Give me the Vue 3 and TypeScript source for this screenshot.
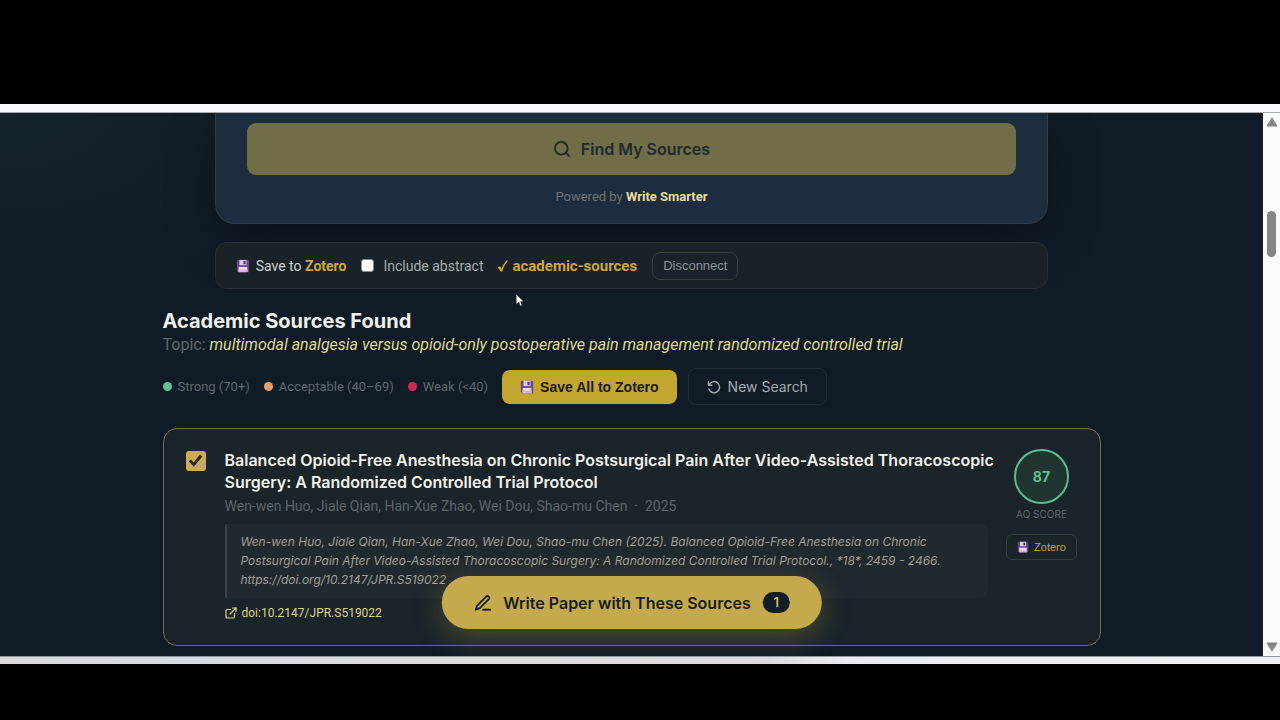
<script setup lang="ts">
import { ref } from 'vue'

interface Band {
  label: string
  tone: string
}

interface Source {
  title: string
  authors: string
  year: number
  citation: string[]
  doi: string
  score: number
}

const bands: Band[] = [
  { label: 'Strong (70+)', tone: 'strong' },
  { label: 'Acceptable (40–69)', tone: 'acceptable' },
  { label: 'Weak (<40)', tone: 'weak' },
]

const source: Source = {
  title:
    'Balanced Opioid-Free Anesthesia on Chronic Postsurgical Pain After Video-Assisted Thoracoscopic Surgery: A Randomized Controlled Trial Protocol',
  authors: 'Wen-wen Huo, Jiale Qian, Han-Xue Zhao, Wei Dou, Shao-mu Chen',
  year: 2025,
  citation: [
    'Wen-wen Huo, Jiale Qian, Han-Xue Zhao, Wei Dou, Shao-mu Chen (2025). Balanced Opioid-Free Anesthesia on Chronic',
    'Postsurgical Pain After Video-Assisted Thoracoscopic Surgery: A Randomized Controlled Trial Protocol., *18*, 2459 - 2466.',
    'https://doi.org/10.2147/JPR.S519022',
  ],
  doi: '10.2147/JPR.S519022',
  score: 87,
}

const includeAbstract = ref(false)
const selected = ref(true)
</script>

<template>
  <div class="screen">
    <svg class="defs" aria-hidden="true">
      <symbol id="floppy" viewBox="0 0 16 16">
        <path d="M1 2.5Q1 1 2.5 1H13.5Q15 1 15 2.500V15H2.500L1 13.500Z" fill="#6c4391" />
        <path d="M4 1H12V7H4Z" fill="#d9d2e2" />
        <path d="M8.500 2H11V6H8.500Z" fill="#5a3480" />
        <path d="M3 9H13V15H3Z" fill="#efd9ec" />
        <path d="M3 12H13V15H3Z" fill="#dcb4d8" />
      </symbol>
    </svg>
    <div class="toolbar"></div>
    <div class="window">
      <main class="page">
        <section class="search-card">
          <button class="find" type="button">
            <svg class="icon-lg" viewBox="0 0 24 24" fill="none" stroke="currentColor" stroke-width="2.4" stroke-linecap="round">
              <circle cx="11" cy="11" r="8.500" />
              <path d="M17.200 17.200L21.500 21.500" />
            </svg>
            <span>Find My Sources</span>
          </button>
          <p class="powered">Powered by <strong>Write Smarter</strong></p>
        </section>

        <section class="zotero-bar">
          <span class="save-to">
            <svg class="floppy"><use href="#floppy" /></svg>
            <span>Save to <strong>Zotero</strong></span>
          </span>
          <label class="abstract">
            <input v-model="includeAbstract" class="mini-check" type="checkbox" />
            <span>Include abstract</span>
          </label>
          <span class="linked">
            <svg class="tick" viewBox="0 0 10 14" fill="none" stroke="currentColor" stroke-linecap="round" stroke-linejoin="round">
              <path d="M1.200 8.500L3.500 11.500" stroke-width="2.200" />
              <path d="M3.500 11.500C5 7.500 6.500 4.500 9 2" stroke-width="1.400" />
            </svg>
            <strong>academic-sources</strong>
          </span>
          <button class="disconnect" type="button">Disconnect</button>
        </section>

        <section class="results">
          <h2>Academic Sources Found</h2>
          <p class="topic">
            Topic:
            <em>multimodal analgesia versus opioid-only postoperative pain management randomized controlled trial</em>
          </p>

          <div class="actions">
            <ul class="legend">
              <li v-for="band in bands" :key="band.tone">
                <i class="dot" :class="band.tone"></i>{{ band.label }}
              </li>
            </ul>
            <button class="save-all" type="button">
              <svg class="floppy"><use href="#floppy" /></svg>
              <span>Save All to Zotero</span>
            </button>
            <button class="new-search" type="button">
              <svg class="icon" viewBox="0 0 24 24" fill="none" stroke="currentColor" stroke-width="2.400" stroke-linecap="round" stroke-linejoin="round">
                <path d="M2.500 3V9H8.500" />
                <path d="M3.200 9A9.500 9.500 0 1 1 3.200 15.500" />
              </svg>
              <span>New Search</span>
            </button>
          </div>

          <article class="source">
            <input v-model="selected" class="pick" type="checkbox" aria-label="Select source" />
            <div class="details">
              <h3>{{ source.title }}</h3>
              <p class="authors">{{ source.authors }} &nbsp;·&nbsp; {{ source.year }}</p>
              <blockquote class="citation">
                <span v-for="line in source.citation" :key="line">{{ line }}</span>
              </blockquote>
              <a class="doi" href="#doi">
                <svg class="icon-sm" viewBox="0 0 24 24" fill="none" stroke="currentColor" stroke-width="2.400" stroke-linecap="round" stroke-linejoin="round">
                  <path d="M11 5H4.500A2.500 2.500 0 0 0 2 7.500V19.500A2.500 2.500 0 0 0 4.500 22H16.500A2.500 2.500 0 0 0 19 19.500V13" />
                  <path d="M15 2H22V9" />
                  <path d="M22 2L10 14" />
                </svg>
                <span>doi:{{ source.doi }}</span>
              </a>
            </div>
            <aside class="rating">
              <span class="score">{{ source.score }}</span>
              <span class="score-label">AQ SCORE</span>
              <button class="zotero-btn" type="button">
                <svg class="floppy-sm"><use href="#floppy" /></svg>
                <span>Zotero</span>
              </button>
            </aside>
          </article>
        </section>

        <button class="write" type="button">
          <svg class="icon-lg" viewBox="0 0 24 24" fill="none" stroke="currentColor" stroke-width="2.400" stroke-linecap="round" stroke-linejoin="round">
            <path d="M12.500 21H22" />
            <path d="M16.500 3.500A2.300 2.300 0 0 1 20 6.800L8 18.800L2.500 21L4.500 15.500Z" />
          </svg>
          <span>Write Paper with These Sources</span>
          <span class="count">1</span>
        </button>

        <svg class="pointer" viewBox="0 0 12 17" aria-hidden="true">
          <path d="M1 1V13L4 10.500L6 15L8 14L6.200 9.800H10Z" fill="#fff" stroke="#111820" stroke-width="0.800" />
        </svg>
      </main>
      <div class="scrollbar" aria-hidden="true">
        <svg class="arrow" viewBox="0 0 12 10"><path d="M6 1L11 9H1Z" fill="#858585" stroke="#858585" stroke-linejoin="round" /></svg>
        <span class="thumb"></span>
        <svg class="arrow" viewBox="0 0 12 10"><path d="M6 9L11 1H1Z" fill="#858585" stroke="#858585" stroke-linejoin="round" /></svg>
      </div>
    </div>
    <div class="taskbar"></div>
  </div>
</template>

<style>
body {
  margin: 0;
  background: #000;
}
</style>

<style scoped>
.screen {
  box-sizing: border-box;
  display: flex;
  flex-direction: column;
  height: 100vh;
  padding: 104px 0 56px;
  background: #000;
  font-family: Inter, "Liberation Sans", sans-serif;
  color: #f2f1ea;
}
.screen *,
.screen *::before {
  box-sizing: border-box;
}
p,
h2,
h3,
ul,
blockquote {
  margin: 0;
  padding: 0;
}
button {
  font-family: inherit;
  cursor: pointer;
  white-space: nowrap;
}
svg {
  flex: none;
}
.defs {
  position: absolute;
  width: 0;
  height: 0;
}
.toolbar {
  height: 9px;
  flex: none;
  background: #f8f9fe;
  border-bottom: 1px solid #a4abb3;
}
.taskbar {
  height: 8px;
  flex: none;
  background: linear-gradient(90deg, #dcd9dd 0%, #d2dbe2 15%, #dddce0 28%, #dcdadd 60%, #ebebf2 66%, #f0f0f2 100%);
  border-top: 1px solid #8f959a;
}
.window {
  display: flex;
  flex: 1;
  min-height: 0;
}
.page {
  position: relative;
  flex: 1;
  min-width: 0;
  overflow: hidden;
  display: flex;
  flex-direction: column;
  align-items: center;
  background: radial-gradient(ellipse 340px 180px at 0 0, #14242a, transparent), #0f1c28;
}
.scrollbar {
  width: 17px;
  flex: none;
  display: flex;
  flex-direction: column;
  align-items: center;
  padding: 4px 0;
  background: #fbfbfb;
}
.arrow {
  width: 12px;
  height: 10px;
}
.thumb {
  width: 9px;
  height: 46px;
  margin: 84px 0 auto;
  border-radius: 5px;
  background: #858585;
}
.search-card {
  width: 66%;
  flex: none;
  padding: 10px 31px 16px;
  border: 1px solid #2a3d48;
  border-top: 0;
  border-radius: 0 0 20px 20px;
  background: #1c2d3e;
  box-shadow: 0 16px 48px rgba(0, 0, 0, 0.35);
}
.find {
  display: flex;
  align-items: center;
  justify-content: center;
  gap: 10px;
  width: 100%;
  height: 52px;
  border: 0;
  border-radius: 9px;
  background: #706d48;
  color: #1f2a2c;
  font-size: 16px;
  font-weight: 600;
}
.icon-lg {
  width: 18px;
  height: 18px;
}
.icon {
  width: 14px;
  height: 14px;
}
.icon-sm {
  width: 12px;
  height: 12px;
}
.powered {
  margin-top: 12px;
  text-align: center;
  font-family: Roboto, Inter, sans-serif;
  font-size: 13px;
  line-height: 20px;
  color: #6e7478;
}
.powered strong {
  color: #e6dc9d;
}
.zotero-bar {
  position: relative;
  display: flex;
  align-items: center;
  gap: 15px;
  width: 66%;
  height: 47px;
  flex: none;
  margin-top: 18px;
  padding: 0 20px;
  border: 1px solid #27302e;
  border-radius: 12px;
  background: #192226;
  font-family: Roboto, Inter, sans-serif;
  font-size: 14px;
  color: #d0d3d3;
}
.zotero-bar strong {
  color: #cda935;
}
.save-to,
.abstract,
.linked {
  display: flex;
  align-items: center;
  white-space: nowrap;
}
.save-to {
  gap: 6px;
}
.floppy {
  width: 14px;
  height: 14px;
}
.floppy-sm {
  width: 12px;
  height: 12px;
}
.abstract {
  gap: 9px;
  color: #a5abae;
}
.mini-check {
  appearance: none;
  width: 13px;
  height: 13px;
  margin: 0;
  border: 1px solid #8a8d90;
  border-radius: 3px;
  background: #fff;
}
.linked {
  gap: 4px;
  font-size: 15px;
  color: #cda935;
}
.tick {
  width: 10px;
  height: 14px;
}
.disconnect {
  height: 28px;
  padding: 0 10px;
  border: 1px solid #35403c;
  border-radius: 8px;
  background: transparent;
  color: #8a949e;
  font-family: "Liberation Sans", Arial, sans-serif;
  font-size: 13px;
}
.results {
  width: 938px;
  max-width: 94%;
  margin-top: 19px;
}
h2 {
  font-size: 20px;
  line-height: 26px;
  font-weight: 700;
  color: #f2f1ea;
}
.topic {
  font-family: Roboto, Inter, sans-serif;
  font-size: 16px;
  line-height: 22px;
  color: #5f676c;
  white-space: nowrap;
}
.topic em {
  color: #e0d894;
}
.actions {
  display: flex;
  align-items: center;
  gap: 11px;
  margin-top: 12px;
}
.legend {
  display: flex;
  gap: 14px;
  margin-right: 3px;
  list-style: none;
  font-family: Roboto, Inter, sans-serif;
  font-size: 13px;
  color: #5f676c;
  white-space: nowrap;
}
.legend li {
  display: flex;
  align-items: center;
  gap: 6px;
}
.dot {
  width: 9px;
  height: 9px;
  border-radius: 50%;
}
.strong {
  background: #5fc092;
}
.acceptable {
  background: #e5a066;
}
.weak {
  background: #d02a50;
}
.save-all,
.new-search {
  display: flex;
  align-items: center;
  justify-content: center;
}
.save-all {
  height: 34px;
  gap: 6px;
  padding: 0 18px;
  border: 0;
  border-radius: 8px;
  background: #c3a62f;
  color: #191c18;
  font-family: "Liberation Sans", Arial, sans-serif;
  font-size: 14px;
  font-weight: 700;
}
.new-search {
  height: 37px;
  gap: 7px;
  padding: 0 18px;
  border: 1px solid #1f2d35;
  border-radius: 8px;
  background: transparent;
  color: #a5a9a8;
  font-size: 14px;
}
.source {
  display: flex;
  margin-top: 23px;
  padding: 20px 22px;
  min-height: 218px;
  border: 1px solid #716f48;
  border-radius: 14px;
  background: #1a2429;
}
.pick {
  appearance: none;
  width: 20px;
  height: 20px;
  flex: none;
  margin: 2px 19px 0 0;
  border-radius: 3px;
  background: #c9ad50;
}
.pick:checked::before {
  content: "";
  display: block;
  width: 20px;
  height: 20px;
  background: #2a2a1c;
  clip-path: polygon(17% 53%, 27% 43%, 41% 57%, 72% 17%, 84% 27%, 42% 79%);
}
.details {
  flex: 1;
  min-width: 0;
}
h3 {
  margin-right: -14px;
  font-size: 16px;
  line-height: 22px;
  font-weight: 600;
}
.authors {
  margin-top: 2px;
  font-family: Roboto, Inter, sans-serif;
  font-size: 14px;
  line-height: 22px;
  color: #5d6669;
  white-space: nowrap;
}
.citation {
  display: flex;
  flex-direction: column;
  margin-top: 7px;
  padding: 8px 14px 9px;
  border-left: 2px solid #38444a;
  border-radius: 2px 8px 8px 2px;
  background: #20292e;
  font-size: 12px;
  line-height: 19px;
  font-style: italic;
  color: #a09f92;
  white-space: nowrap;
}
.doi {
  display: inline-flex;
  align-items: center;
  gap: 5px;
  margin-top: 5px;
  font-family: Roboto, Inter, sans-serif;
  font-size: 12px;
  line-height: 20px;
  color: #ddd28c;
  text-decoration: none;
}
.rating {
  display: flex;
  flex-direction: column;
  align-items: center;
  width: 72px;
  margin-left: 18px;
}
.score {
  display: flex;
  align-items: center;
  justify-content: center;
  width: 55px;
  height: 55px;
  flex: none;
  border: 2px solid #5dbb93;
  border-radius: 50%;
  background: #20352f;
  color: #62bf94;
  font-size: 14px;
  font-weight: 700;
}
.score-label {
  margin-top: 2px;
  font-size: 10px;
  line-height: 16px;
  color: #5d6669;
  white-space: nowrap;
}
.zotero-btn {
  display: flex;
  align-items: center;
  gap: 5px;
  height: 26px;
  margin-top: 12px;
  padding: 0 10px;
  border: 1px solid #35403a;
  border-radius: 6px;
  background: transparent;
  color: #c4a534;
  font-family: "Liberation Sans", Arial, sans-serif;
  font-size: 11px;
}
.write {
  position: absolute;
  left: 50%;
  bottom: 27px;
  transform: translateX(-50%);
  display: flex;
  align-items: center;
  gap: 12px;
  height: 53px;
  padding: 0 32px;
  border: 0;
  border-radius: 27px;
  background: #c4aa4c;
  color: #171d1c;
  font-size: 16px;
  font-weight: 600;
  box-shadow: 0 8px 30px rgba(196, 170, 76, 0.3);
}
.count {
  width: 27px;
  border-radius: 11px;
  background: #101c26;
  color: #d5bd62;
  font-size: 13px;
  line-height: 21px;
}
.pointer {
  position: absolute;
  left: 515px;
  top: 180px;
  width: 11px;
  height: 15px;
}
</style>
